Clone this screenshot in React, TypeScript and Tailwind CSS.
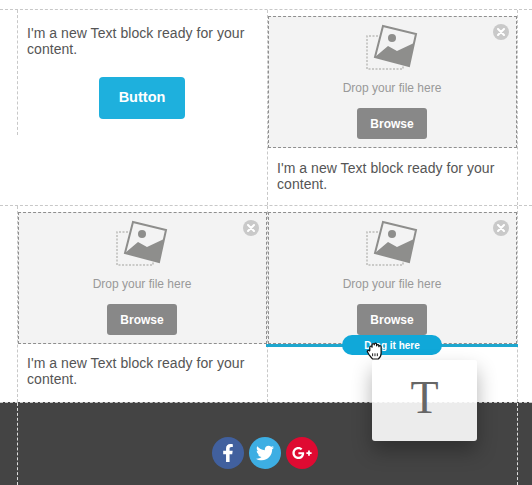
import { FaFacebookF, FaTwitter, FaGooglePlusG } from "react-icons/fa";

function TextBlock({ className }: { className: string }) {
  return (
    <p className={`px-[9px] text-[14px] leading-[16px] tracking-[0.05px] text-[#555] ${className}`}>
      I'm a new Text block ready for your content.
    </p>
  );
}

function PlaceholderIcon() {
  return (
    <svg width="54" height="48" viewBox="0 0 54 48" fill="none">
      <path d="M13 12H2V45H38V41" stroke="#bdbdbb" strokeWidth="1.5" strokeDasharray="2 1.5" />
      <path d="M18 2L51 10L44 42L10 33Z" fill="#f3f3f3" stroke="#8e8e8c" strokeWidth="2" />
      <path d="M10 33L23 22L32 27L49 19L44 42Z" fill="#8e8e8c" />
      <circle cx="27" cy="14" r="4" fill="#8e8e8c" />
    </svg>
  );
}

function ImagePlaceholder() {
  return (
    <div className="relative flex h-[132px] flex-col items-center border border-dashed border-[#8f8f8f] bg-[#f3f3f3] pr-px pt-[7px]">
      <div className="absolute right-[7px] top-[7px] flex h-[16px] w-[16px] items-center justify-center rounded-full bg-[#c9c9c9]">
        <svg width="8" height="8" viewBox="0 0 8 8">
          <path d="M1 1L7 7M7 1L1 7" stroke="#fff" strokeWidth="2" strokeLinecap="round" />
        </svg>
      </div>
      <PlaceholderIcon />
      <div className="mt-[8px] text-[12px] leading-[16px] text-[#999]">Drop your file here</div>
      <div className="mt-[12px] flex h-[31px] w-[70px] items-center justify-center rounded-[3px] bg-[#888] text-[12px] font-bold text-white">
        Browse
      </div>
    </div>
  );
}

export default function App() {
  return (
    <div className="relative h-[485px] w-[532px] overflow-hidden bg-white pt-[9px] font-['Liberation_Sans',Arial,sans-serif]">
      {/* first row */}
      <div className="flex h-[196px] border-t border-dashed border-[#c8c8c8] pl-[17px]">
        <div className="h-[125px] w-[250px] border-l border-dashed border-[#c8c8c8]">
          <TextBlock className="pt-[15px]" />
          <div className="mt-[20px] flex justify-center pr-px">
            <div className="flex h-[42px] w-[86px] items-center justify-center rounded-[4px] bg-[#1eb0dd] text-[14.5px] font-bold text-white">
              Button
            </div>
          </div>
        </div>
        <div className="w-[251px] border-x border-dashed border-[#c8c8c8] pt-[6px]">
          <ImagePlaceholder />
          <TextBlock className="pt-[12px]" />
        </div>
      </div>

      {/* second row */}
      <div className="flex h-[197px] border-t border-dashed border-[#c8c8c8] pl-[17px]">
        <div className="w-[250px] border-l border-dashed border-[#c8c8c8] pt-[6px]">
          <ImagePlaceholder />
          <TextBlock className="pt-[11px]" />
        </div>
        <div className="w-[251px] border-x border-dashed border-[#c8c8c8] pt-[6px]">
          <ImagePlaceholder />
          <div className="relative -ml-[2px] -mr-px h-[3px] bg-[#1ea7cf]">
            <div className="absolute left-[76px] top-[-9px] flex h-[20px] w-[100px] items-center justify-center rounded-full bg-[#10a8d9] text-[10px] font-bold text-white">
              Drag it here
            </div>
          </div>
        </div>
      </div>

      {/* footer */}
      <div className="flex h-[83px] items-start justify-center gap-[5px] border-t border-dashed border-[#c8c8c8] bg-[#444] pr-[2px] pt-[34px]">
        <div className="flex h-[32px] w-[32px] items-center justify-center rounded-full bg-[#41609e] text-[18px] text-white">
          <FaFacebookF />
        </div>
        <div className="flex h-[32px] w-[32px] items-center justify-center rounded-full bg-[#3daee3] text-[18px] text-white">
          <FaTwitter />
        </div>
        <div className="flex h-[32px] w-[32px] items-center justify-center rounded-full bg-[#df0a32] text-[20px] text-white">
          <FaGooglePlusG />
        </div>
      </div>

      {/* dashed column guides running through the footer */}
      <div className="absolute left-[17px] top-[403px] h-[82px] border-l border-dashed border-[#ddd]" />
      <div className="absolute left-[517px] top-[403px] h-[82px] border-l border-dashed border-[#ddd]" />

      {/* block being dragged */}
      <div className="absolute left-[372px] top-[360px] flex h-[81px] w-[105px] items-center justify-center rounded-[3px] bg-white/90 pb-[6px] font-['Liberation_Serif',serif] text-[46px] text-[#666] shadow-[0_10px_20px_rgba(0,0,0,0.3)]">
        T
      </div>

      {/* grab cursor */}
      <svg className="absolute left-[366px] top-[341px]" width="17" height="19" viewBox="0 0 18 20">
        <path
          d="M4 10V6.500a1.200 1.200 0 0 1 2.400 0V4a1.200 1.200 0 0 1 2.400 0v-.5a1.200 1.200 0 0 1 2.400 0V5a1.200 1.200 0 0 1 2.400 0v1a1.200 1.200 0 0 1 2.400 0V13c0 3-1.500 5-3 6H7c-1.500-1-2.500-3-4-5l-1.500-2.500c-.7-1.300 1-2.300 2-1z"
          fill="#fff"
          stroke="#111"
          strokeWidth="1.300"
          strokeLinejoin="round"
        />
        <path d="M7 13v3M9.500 13v3M12 13v3" stroke="#111" strokeWidth="1" />
      </svg>
    </div>
  );
}
